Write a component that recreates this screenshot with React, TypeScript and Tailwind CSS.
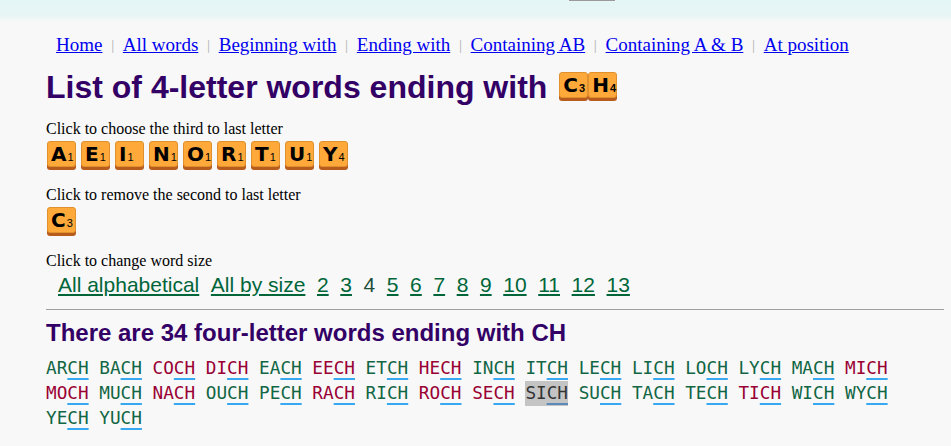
import React from "react";

const serif = { fontFamily: '"Liberation Serif", "Times New Roman", serif' };
const sans = { fontFamily: '"Liberation Sans", Arial, sans-serif' };
const tileFont = { fontFamily: '"DejaVu Sans", Verdana, sans-serif' };
const mono = { fontFamily: '"DejaVu Sans Mono", monospace' };

function Tile({ l, n }: { l: string; n: number }) {
  return (
    <span
      className="inline-flex items-center h-[26px] w-[29px] bg-[#ffa93a] border border-[#e0902c] rounded-[3px] shadow-[0_3px_0_#b85c1e] pl-[3px] text-black"
    >
      <span className="text-[20px] font-bold leading-none" style={tileFont}>{l}</span>
      <span className="text-[11px] leading-none self-end mb-[3px] ml-[1px]" style={sans}>{n}</span>
    </span>
  );
}

const navItems = [
  "Home",
  "All words",
  "Beginning with",
  "Ending with",
  "Containing AB",
  "Containing A & B",
  "At position",
];

const words: [string, "g" | "r"][] = [
  ["AR", "g"], ["BA", "g"], ["CO", "r"], ["DI", "r"], ["EA", "g"], ["EE", "r"],
  ["ET", "g"], ["HE", "r"], ["IN", "g"], ["IT", "g"], ["LE", "g"], ["LI", "g"],
  ["LO", "g"], ["LY", "g"], ["MA", "g"], ["MI", "r"], ["MO", "r"], ["MU", "g"],
  ["NA", "r"], ["OU", "g"], ["PE", "g"], ["RA", "r"], ["RI", "g"], ["RO", "r"],
  ["SE", "r"], ["SI", "g"], ["SU", "g"], ["TA", "g"], ["TE", "g"], ["TI", "r"],
  ["WI", "g"], ["WY", "g"], ["YE", "g"], ["YU", "g"],
];

const sizes = ["2", "3", "4", "5", "6", "7", "8", "9", "10", "11", "12", "13"];

export default function App() {
  return (
    <div className="relative min-h-[446px] w-[951px] bg-[linear-gradient(to_bottom,#e4f6f6_0px,#e7f5f5_15px,#f8f8f8_22px)] text-black">
      <div className="absolute left-[569px] top-0 h-[1px] w-[46px] bg-[#9a9a9a]" />
      <div className="pl-[46px] pr-[7px] pt-[33px]">
        <nav className="flex items-center gap-[8.7px] pl-[10px] text-[19px] leading-[24px]" style={serif}>
          {navItems.map((t, i) => (
            <React.Fragment key={t}>
              {i > 0 && <span className="text-[#b0b0b0] text-[15px]">|</span>}
              <a href="#" className="text-[#0000ee] underline">{t}</a>
            </React.Fragment>
          ))}
        </nav>

        <h1 className="mt-[10px] flex items-center text-[32px] leading-[40px] font-bold text-[#330066]" style={sans}>
          <span>List of 4-letter words ending with</span>
          <span className="ml-[12px] flex mt-[-4px]">
            <Tile l="C" n={3} />
            <Tile l="H" n={4} />
          </span>
        </h1>

        <div className="mt-[13px] text-[16px] leading-[18px]" style={serif}>
          Click to choose the third to last letter
        </div>
        <div className="mt-[3px] flex gap-[5px] h-[30px] pl-[1px]">
          {[["A", 1], ["E", 1], ["I", 1], ["N", 1], ["O", 1], ["R", 1], ["T", 1], ["U", 1], ["Y", 4]].map(
            ([l, n]) => (
              <Tile key={l as string} l={l as string} n={n as number} />
            )
          )}
        </div>

        <div className="mt-[15px] text-[16px] leading-[18px]" style={serif}>
          Click to remove the second to last letter
        </div>
        <div className="mt-[3px] flex h-[30px] pl-[1px]">
          <Tile l="C" n={3} />
        </div>

        <div className="mt-[15px] text-[16px] leading-[18px]" style={serif}>
          Click to change word size
        </div>
        <div className="mt-[3px] flex gap-[11.6px] pl-[12px] text-[21px] leading-[24px]" style={sans}>
          <a href="#" className="text-[#00663a] underline">All alphabetical</a>
          <a href="#" className="text-[#00663a] underline">All by size</a>
          {sizes.map((s) =>
            s === "4" ? (
              <span key={s} className="text-[#1d4d3a]">{s}</span>
            ) : (
              <a key={s} href="#" className="text-[#00663a] underline">{s}</a>
            )
          )}
        </div>

        <hr className="mt-[12px] border-0 border-t border-[#a0a0a0]" />

        <h2 className="mt-[9px] text-[24px] leading-[28px] font-bold text-[#330066]" style={sans}>
          There are 34 four-letter words ending with CH
        </h2>

        <div className="mt-[9px] flex flex-wrap text-[17.7px] leading-[25px]" style={mono}>
          {words.map(([p, c]) => {
            const sel = p === "SI";
            return (
              <span
                key={p}
                className={
                  "mr-[1ch] whitespace-nowrap " +
                  (sel ? "bg-[#c4c4c4] text-[#333333]" : c === "r" ? "text-[#990033]" : "text-[#116644]")
                }
              >
                {p}
                <span className={"underline decoration-2 underline-offset-[4px] " + (sel ? "decoration-[#5c8ab8]" : "decoration-[#38a8f0]")}>
                  CH
                </span>
              </span>
            );
          })}
        </div>
      </div>
    </div>
  );
}
